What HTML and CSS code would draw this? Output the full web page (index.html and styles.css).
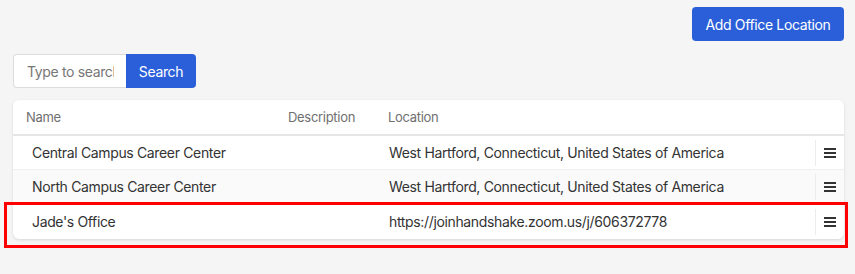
FILE: index.html
```html
<!DOCTYPE html>
<html>
<head>
<meta charset="utf-8">
<link rel="stylesheet" href="styles.css">
</head>
<body>
<div class="page">
  <div class="topbar">
    <button class="btn-primary add-btn">Add Office Location</button>
  </div>
  <div class="search">
    <input class="search-input" type="text" placeholder="Type to search">
    <button class="btn-primary search-btn">Search</button>
  </div>
  <div class="card">
    <table class="grid">
      <thead>
        <tr>
          <th class="c-name">Name</th>
          <th class="c-desc">Description</th>
          <th class="c-loc">Location</th>
          <th class="c-act"></th>
        </tr>
      </thead>
      <tbody>
        <tr>
          <td class="c-name">Central Campus Career Center</td>
          <td class="c-desc"></td>
          <td class="c-loc">West Hartford, Connecticut, United States of America</td>
          <td class="c-act"><div class="act"><svg width="12" height="10" viewBox="0 0 12 10"><rect y="0" width="12" height="2" fill="#333"/><rect y="4" width="12" height="2" fill="#333"/><rect y="8" width="12" height="2" fill="#333"/></svg></div></td>
        </tr>
        <tr class="alt">
          <td class="c-name">North Campus Career Center</td>
          <td class="c-desc"></td>
          <td class="c-loc">West Hartford, Connecticut, United States of America</td>
          <td class="c-act"><div class="act"><svg width="12" height="10" viewBox="0 0 12 10"><rect y="0" width="12" height="2" fill="#333"/><rect y="4" width="12" height="2" fill="#333"/><rect y="8" width="12" height="2" fill="#333"/></svg></div></td>
        </tr>
        <tr class="hl">
          <td class="c-name">Jade's Office</td>
          <td class="c-desc"></td>
          <td class="c-loc">https://joinhandshake.zoom.us/j/606372778</td>
          <td class="c-act"><div class="act"><svg width="12" height="10" viewBox="0 0 12 10"><rect y="0" width="12" height="2" fill="#333"/><rect y="4" width="12" height="2" fill="#333"/><rect y="8" width="12" height="2" fill="#333"/></svg></div></td>
        </tr>
      </tbody>
    </table>
    <div class="highlight"></div>
  </div>
</div>
</body>
</html>
```

FILE: styles.css
```css
* { box-sizing: border-box; }
html, body { margin: 0; padding: 0; }
body {
  background: #f5f5f5;
  font-family: Inter, "Noto Sans", sans-serif;
  color: #333;
  width: 855px;
  height: 274px;
  overflow: hidden;
}
.page {
  padding: 7px 11px 0 13px;
}
.topbar {
  display: flex;
  justify-content: flex-end;
}
.btn-primary {
  background: #2b5fd9;
  color: #fff;
  border: none;
  font-family: Inter, "Noto Sans", sans-serif;
  font-size: 14px;
  letter-spacing: -0.35px;
  border-radius: 4px;
  cursor: pointer;
}
.add-btn {
  width: 152px;
  height: 34px;
  padding: 0;
}
.search {
  display: flex;
  margin-top: 13px;
}
.search-input {
  width: 113px;
  height: 34px;
  border: 1px solid #dcdcdc;
  border-right: none;
  border-radius: 4px 0 0 4px;
  background: #fff;
  padding: 0 12px 0 13px;
  font-family: Inter, "Noto Sans", sans-serif;
  font-size: 14px;
  letter-spacing: -0.35px;
  color: #333;
  outline: none;
}
.search-input::placeholder { color: #777; }
.search-btn {
  width: 70px;
  height: 34px;
  border-radius: 0 4px 4px 0;
  padding: 0;
}
.card {
  position: relative;
  margin-top: 12px;
  width: 831px;
  background: #fff;
  border-radius: 6px;
  box-shadow: 0 1px 3px rgba(0,0,0,0.12);
}
.grid {
  width: 100%;
  border-collapse: collapse;
  table-layout: fixed;
}
.grid th {
  height: 35px;
  font-weight: 400;
  font-size: 13px;
  letter-spacing: -0.3px;
  color: #6f6f6f;
  text-align: left;
  border-bottom: 2px solid #e6e6e6;
  padding: 0;
}
.grid td {
  height: 34.5px;
  font-size: 14px;
  letter-spacing: -0.35px;
  color: #333;
  padding: 0;
  border-bottom: 1px solid #f0f0f0;
}
.grid tr:last-child td { border-bottom: none; }
.grid tr.alt td { background: #fafafa; }
.grid th.c-name { width: 262px; padding-left: 13px; }
.grid td.c-name { padding-left: 19px; }
.grid .c-desc { width: 100px; }
.grid th.c-desc { padding-left: 13px; }
.grid th.c-loc { padding-left: 13px; }
.grid td.c-loc { padding-left: 14px; }
.grid .c-act { width: 29px; }
.act {
  height: 26px;
  border-left: 1px solid #ececec;
  display: flex;
  align-items: center;
  justify-content: center;
}
.act svg { display: block; }
.highlight {
  position: absolute;
  left: -9px;
  top: 102px;
  width: 844px;
  height: 46px;
  border: 3px solid #f00;
  pointer-events: none;
}
```
